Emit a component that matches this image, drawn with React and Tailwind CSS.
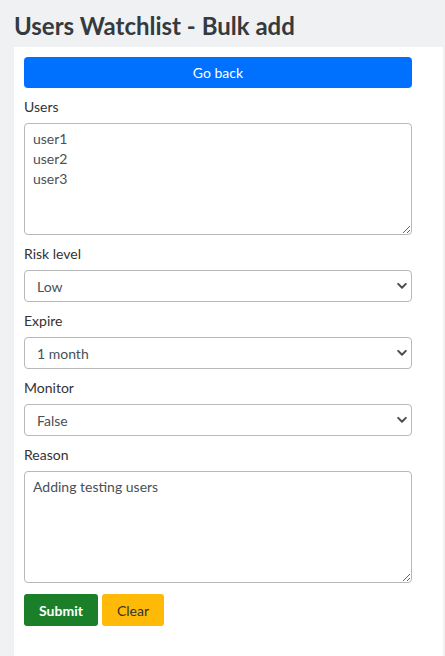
import React from "react";

function Chevron() {
  return (
    <svg className="pointer-events-none absolute right-[5px] top-1/2 -translate-y-1/2" width="10" height="7" viewBox="0 0 10 7">
      <path d="M1.2 1.4L5 5.2l3.8-3.8" fill="none" stroke="#4a4f55" strokeWidth="2" strokeLinecap="round" strokeLinejoin="round" />
    </svg>
  );
}

function Select({ value }) {
  return (
    <div className="relative">
      <select
        defaultValue={value}
        className="block h-[32px] w-full appearance-none rounded-[4px] border border-[#b8b8b8] bg-white pl-[12px] pr-8 text-[14px] text-[#495057] outline-none"
      >
        <option>{value}</option>
      </select>
      <Chevron />
    </div>
  );
}

function Label({ children }) {
  return <label className="mb-[6px] block text-[14px] leading-[20px] text-[#333]">{children}</label>;
}

export default function App() {
  return (
    <div className="min-h-[656px] bg-[#f0f1f3]" style={{ fontFamily: "Lato, 'Open Sans', sans-serif" }}>
      <h1 className="px-[14px] pt-[10px] pb-[5px] text-[24px] font-bold leading-[32px] text-[#343a40]">Users Watchlist - Bulk add</h1>
      <div className="ml-[14px] mr-[2px] min-h-[609px] bg-white pl-[10px] pr-[31px] pt-[10px]">
        <button className="h-[31px] w-full rounded-[4px] bg-[#0070ff] text-[14px] text-white">Go back</button>
        <div className="mt-[9px]">
          <Label>Users</Label>
          <textarea
            defaultValue={"user1\nuser2\nuser3"}
            className="block h-[112px] w-full rounded-[4px] border border-[#b8b8b8] px-[8px] py-[5px] text-[14px] leading-[20px] text-[#495057] outline-none"
          />
        </div>
        <div className="mt-[9px]">
          <Label>Risk level</Label>
          <Select value="Low" />
        </div>
        <div className="mt-[9px]">
          <Label>Expire</Label>
          <Select value="1 month" />
        </div>
        <div className="mt-[9px]">
          <Label>Monitor</Label>
          <Select value="False" />
        </div>
        <div className="mt-[9px]">
          <Label>Reason</Label>
          <textarea
            defaultValue="Adding testing users"
            className="block h-[112px] w-full rounded-[4px] border border-[#b8b8b8] px-[8px] py-[5px] text-[14px] leading-[20px] text-[#495057] outline-none"
          />
        </div>
        <div className="mt-[11px] flex gap-[4px]">
          <button className="h-[32px] w-[74px] rounded-[3px] bg-[#1b7f2a] text-[14px] font-bold text-white">Submit</button>
          <button className="h-[32px] w-[62px] rounded-[3px] bg-[#ffba08] text-[14px] text-[#333]">Clear</button>
        </div>
      </div>
    </div>
  );
}
